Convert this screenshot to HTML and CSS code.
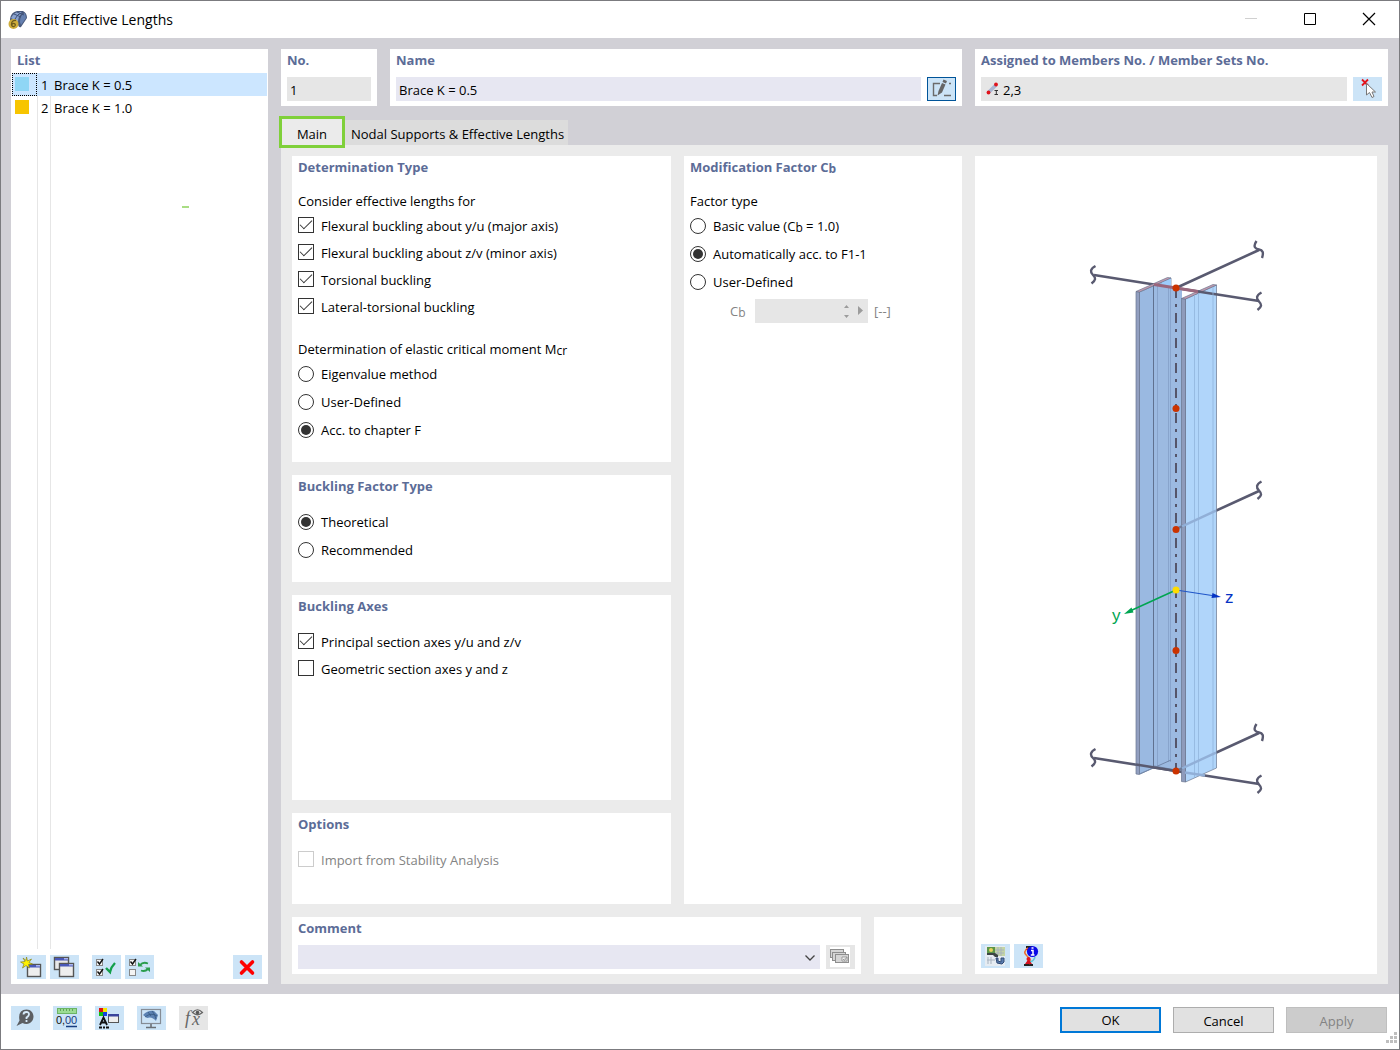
FILE: index.html
```html
<!DOCTYPE html>
<html lang="en">
<head>
<meta charset="utf-8">
<meta name="viewport" content="width=device-width, initial-scale=1">
<title>Edit Effective Lengths</title>
<link rel="stylesheet" href="styles.css">
</head>
<body>
<div class="window">
  <header class="titlebar">
    <svg class="app-icon" width="20" height="20" viewBox="0 0 20 20" aria-hidden="true">
      <path d="M2 9 Q3 2 9 1 L15 1 Q19 3 19 8 L13 17 Q11 18 10 15 L2 12Z" fill="#4a5a7c"/>
      <path d="M3 8 Q6 2 11 2 L15 2 Q10 6 10 12Z" fill="#8ba3cf"/>
      <path d="M12 12 Q12 5 17 3 L18 8 L13 15Z" fill="#6580b0"/>
      <path d="M6 4 L13 7 M9 2 L16 5 M7 9 Q9 4 15 2" fill="none" stroke="#3c5078" stroke-width="1"/>
      <circle cx="5.500" cy="14" r="5" fill="#cfae3c"/>
      <path d="M8 10.500 Q3.500 10 3.500 14.500 Q4 17 6 16.500 Q8 15.500 7 14 Q5.500 12.500 3.800 14.500" fill="none" stroke="#6d5b1c" stroke-width="1.300"/>
    </svg>
    <h1 class="titlebar-text">Edit Effective Lengths</h1>
    <div class="window-controls">
      <button class="window-button" aria-label="Minimize" disabled><svg width="14" height="14" viewBox="0 0 14 14"><path d="M1 6.500H13" stroke="#d0d0d0"/></svg></button>
      <button class="window-button" aria-label="Maximize"><svg width="14" height="14" viewBox="0 0 14 14"><path d="M1.500 1.500H12.500V12.500H1.500Z" fill="none" stroke="#000"/></svg></button>
      <button class="window-button" aria-label="Close"><svg width="14" height="14" viewBox="0 0 14 14"><path d="M1 1L13 13M13 1L1 13" stroke="#000" stroke-width="1.200"/></svg></button>
    </div>
  </header>

  <main class="body">
    <section class="list-panel">
      <h2 class="card-title list-title">List</h2>
      <div class="list-area">
        <table class="list">
          <tbody>
            <tr class="list-row selected"><td class="list-color focused"><span class="swatch sky"></span></td><td class="list-no">1</td><td class="list-name">Brace K = 0.5</td></tr>
            <tr class="list-row"><td class="list-color"><span class="swatch amber"></span></td><td class="list-no">2</td><td class="list-name">Brace K = 1.0</td></tr>
          </tbody>
        </table>
        <span class="marker"></span>
      </div>
      <div class="list-tools">
        <div class="tool-pair">
          <button class="tool" aria-label="New">
            <svg width="24" height="24" viewBox="0 0 24 24"><rect x="8.500" y="9.500" width="13" height="12" fill="#eee" stroke="#555" stroke-width="1.400"/><rect x="9" y="10" width="12" height="2.500" fill="#4a58b8"/><rect x="17" y="10" width="4" height="1.500" fill="#aab6ee"/><path d="M7.500 2L8.500 6L12.500 4L10 7.500L13.500 9L9.500 9.500L10.500 13L7 10.500L3.500 13L5 9L1.500 7L6 6.500L4 3L7 5.500Z" fill="#fff200" stroke="#8a8420" stroke-width=".7"/></svg>
          </button>
          <button class="tool" aria-label="Copy">
            <svg width="24" height="24" viewBox="0 0 24 24"><rect x="2.500" y="2.500" width="14" height="12" fill="#e8e8e8" stroke="#555" stroke-width="1.400"/><rect x="3" y="3" width="13" height="2.500" fill="#4a58b8"/><rect x="12" y="3" width="4" height="1.500" fill="#aab6ee"/><rect x="7.500" y="8.500" width="14" height="13" fill="#eee" stroke="#555" stroke-width="1.400"/><rect x="8" y="9" width="13" height="2.500" fill="#4a58b8"/><rect x="17" y="9" width="4" height="1.500" fill="#aab6ee"/></svg>
          </button>
        </div>
        <div class="tool-pair">
          <button class="tool" aria-label="Select all">
            <svg width="24" height="24" viewBox="0 0 24 24"><g fill="#f4f4f4" stroke="#888"><rect x="2.500" y="4.500" width="6" height="6"/><rect x="2.500" y="14.500" width="6" height="6"/></g><path d="M3.500 6.500L5.500 9L9 4M3.500 16.500L5.500 19L9 14" fill="none" stroke="#111" stroke-width="1.400"/><path d="M12 13L16 17Q17 12 21 8" fill="none" stroke="#12a04a" stroke-width="2.400"/></svg>
          </button>
          <button class="tool" aria-label="Invert selection">
            <svg width="24" height="24" viewBox="0 0 24 24"><g fill="#f4f4f4" stroke="#888"><rect x="2.500" y="4.500" width="6" height="6"/><rect x="2.500" y="14.500" width="6" height="6"/></g><path d="M3.500 6.500L5.500 9L9 4" fill="none" stroke="#111" stroke-width="1.400"/><path d="M13 10Q16 6.500 21 8.500M21 14Q18 17 14 15.500" fill="none" stroke="#2a9d4c" stroke-width="1.800"/><path d="M11 7V11.500H16ZM23 17V12.500H18Z" fill="#2a9d4c"/></svg>
          </button>
        </div>
        <button class="tool tool-end" aria-label="Delete">
          <svg width="24" height="24" viewBox="0 0 24 24"><path d="M6.500 7L17.500 18M17.500 7L6.500 18" stroke="#fe0000" stroke-width="3.600" stroke-linecap="round"/></svg>
        </button>
      </div>
    </section>

    <div class="detail">
      <div class="head-row">
        <section class="card card-no">
          <label class="card-title" for="no">No.</label>
          <div class="field-row"><input class="field readonly" id="no" type="text" value="1" readonly></div>
        </section>
        <section class="card card-name">
          <label class="card-title" for="name">Name</label>
          <div class="field-row">
            <input class="field" id="name" type="text" value="Brace K = 0.5">
            <button class="tool tool-active" aria-label="Edit name">
              <svg width="24" height="24" viewBox="0 0 24 24"><path d="M11 6.500H4.500V18.500H8M15 18.500H22M20 6.500H22" fill="none" stroke="#6b6b6b" stroke-width="1.400"/><path d="M14.500 2.500L18 4L17 6.500L13.500 5ZM13 6L16.500 7.500L13 15.500L8.500 18.500L9.500 14Z" fill="#666"/></svg>
            </button>
          </div>
        </section>
        <section class="card card-assigned">
          <label class="card-title" for="assigned">Assigned to Members No. / Member Sets No.</label>
          <div class="field-row">
            <div class="icon-field">
              <svg width="14" height="14" viewBox="0 0 14 14" aria-hidden="true"><path d="M3 10L10 3" stroke="#a9b7d3" stroke-width="3.500"/><circle cx="2.500" cy="10.500" r="1.900" fill="#e0141c"/><circle cx="10" cy="2.500" r="1.900" fill="#e0141c"/><path d="M8.500 8.500H12M8.500 12.500H12M10.300 8.500V12.500" stroke="#333"/></svg>
              <input class="field readonly" id="assigned" type="text" value="2,3" readonly>
            </div>
            <button class="tool" aria-label="Pick members">
              <svg width="24" height="24" viewBox="0 0 24 24"><path d="M7 2.500L13 8.500M13 2.500L7 8.500" stroke="#e3141c" stroke-width="1.800"/><path d="M11.500 6.500V18L14.500 15.500L17 20.500L19 19.500L17 15H20.500Z" fill="#fff" stroke="#777"/></svg>
            </button>
          </div>
        </section>
      </div>

      <nav class="tabs">
        <button class="tab tab-current">Main</button>
        <button class="tab">Nodal Supports &amp; Effective Lengths</button>
      </nav>

      <div class="tab-panel">
        <div class="forms">
          <div class="form-columns">
            <div class="form-stack">
              <section class="card card-padded">
                <h2 class="card-title">Determination Type</h2>
                <p class="group-label">Consider effective lengths for</p>
                <label class="check-row"><input type="checkbox" checked>Flexural buckling about y/u (major axis)</label>
                <label class="check-row"><input type="checkbox" checked>Flexural buckling about z/v (minor axis)</label>
                <label class="check-row"><input type="checkbox" checked>Torsional buckling</label>
                <label class="check-row"><input type="checkbox" checked>Lateral-torsional buckling</label>
                <p class="group-label group-second">Determination of elastic critical moment M<span class="low">cr</span></p>
                <label class="radio-row"><input type="radio" name="mcr">Eigenvalue method</label>
                <label class="radio-row"><input type="radio" name="mcr">User-Defined</label>
                <label class="radio-row"><input type="radio" name="mcr" checked>Acc. to chapter F</label>
              </section>
              <section class="card card-padded">
                <h2 class="card-title title-spaced">Buckling Factor Type</h2>
                <label class="radio-row"><input type="radio" name="factor" checked>Theoretical</label>
                <label class="radio-row"><input type="radio" name="factor">Recommended</label>
              </section>
              <section class="card card-grow">
                <h2 class="card-title title-spaced">Buckling Axes</h2>
                <label class="check-row"><input type="checkbox" checked>Principal section axes y/u and z/v</label>
                <label class="check-row"><input type="checkbox">Geometric section axes y and z</label>
              </section>
              <section class="card card-options">
                <h2 class="card-title title-spaced">Options</h2>
                <label class="check-row disabled"><input type="checkbox" disabled>Import from Stability Analysis</label>
              </section>
            </div>
            <section class="card">
              <h2 class="card-title">Modification Factor C<span class="low">b</span></h2>
              <p class="group-label">Factor type</p>
              <label class="radio-row"><input type="radio" name="cb"><span>Basic value (C<span class="low">b</span> = 1.0)</span></label>
              <label class="radio-row"><input type="radio" name="cb" checked>Automatically acc. to F1-1</label>
              <label class="radio-row"><input type="radio" name="cb">User-Defined</label>
              <div class="cb-row">
                <label class="cb-label" for="cb-value">C<span class="low">b</span></label>
                <div class="spin">
                  <input class="field readonly" id="cb-value" type="text" disabled>
                  <svg width="24" height="16" viewBox="0 0 24 16" aria-hidden="true"><path d="M1 5H6L3.500 2ZM1 12H6L3.500 15ZM15 3V12L20 7.500Z" fill="#9c9c9c"/></svg>
                </div>
                <span>[--]</span>
              </div>
            </section>
          </div>
          <div class="comment-row">
            <section class="card card-comment">
              <label class="card-title" for="comment">Comment</label>
              <div class="field-row">
                <div class="select-wrap">
                  <select class="field" id="comment"><option></option></select>
                  <svg class="chevron" width="12" height="8" viewBox="0 0 12 8" aria-hidden="true"><path d="M1.500 1.500L6 6L10.500 1.500" fill="none" stroke="#444" stroke-width="1.300"/></svg>
                </div>
                <button class="tool tool-disabled" aria-label="Comment library" disabled>
                  <svg width="24" height="24" viewBox="0 0 24 24"><rect x="2" y="2" width="20" height="20" fill="#fff"/><g fill="#d5d5d5" stroke="#8e8e8e"><rect x="2.500" y="4.500" width="13" height="8"/><rect x="4.500" y="7.500" width="13" height="8"/><rect x="7.500" y="9.500" width="13" height="8"/></g><path d="M14 12H19V16H14ZM15 14L16.500 15.500L19 12" fill="#fff" stroke="#999"/></svg>
                </button>
              </div>
            </section>
            <section class="card"></section>
          </div>
        </div>

        <section class="card preview">
          <svg class="figure" viewBox="1076 200 200 700" width="200" height="700" role="img" aria-label="Member with y and z axes">
            <g fill="none" stroke="#595a70" stroke-width="2.600">
              <path d="M1094 275L1176 288L1259 301M1176 288L1259 250M1176 529L1259 491M1094 758L1176 771L1259 784M1176 771L1259 733"/>
            </g>
            <g stroke="#69768f" stroke-width=".7">
              <path d="M1139.500 292L1171 278V760L1139.500 774Z" fill="#9ab9e1"/>
              <path d="M1162 282L1171 278V286L1162 284Z" fill="#9dccfb" stroke="none"/>
              <path d="M1153.500 285L1182 289.500V772L1153.500 767Z" fill="#9cbae1" stroke="none"/>
              <path d="M1136 291.500L1139.500 292V774.500L1136 774Z" fill="#929fc0"/>
              <path d="M1136 291.500L1167.500 277.500L1171 278L1139.500 292Z" fill="#c69aae"/>
            </g>
            <path d="M1153.500 285V767" stroke="#60718f" stroke-width="1"/>
            <path d="M1157.500 286V767M1168.500 288V762M1170.500 288V762" stroke="#839ec6" stroke-width=".8"/>
            <path d="M1140 774L1171 760M1154 766L1176 770" stroke="#7187aa" stroke-width="1"/>
            <path d="M1136 764.500L1176 771L1182 772" stroke="#595a70" stroke-width="2.600"/>
            <g stroke="#69768f" stroke-width=".7">
              <path d="M1185.500 299L1216.500 285V768L1185.500 782Z" fill="#b0d5fa"/>
              <path d="M1181.500 298.500L1185.500 299V782L1181.500 781.500Z" fill="#8e9bbb"/>
              <path d="M1181.500 298.500L1213 284.500L1216.500 285L1185.500 299Z" fill="#c69aae"/>
            </g>
            <path d="M1154 284.500L1198 291.500" stroke="#9a667c" stroke-width="3.200"/>
            <path d="M1198 291.500L1217 294.500" stroke="#595a70" stroke-width="2.600"/>
            <path d="M1194.500 295V777M1198.500 293V776M1213 287V769" stroke="#91b4dc" stroke-width=".8"/>
            <path d="M1176 529L1184 525.300M1176 771L1184 767.300" stroke="#6e7c99" stroke-width="2.400"/>
            <path d="M1182 526.300L1216 510.700M1182 768.300L1216 752.700M1185 772.500L1205 775.500" stroke="#91afd7" stroke-width="2.400"/>
            <path d="M1176 288V771" stroke="#55556a" stroke-width="2" stroke-dasharray="10 6 3 6"/>
            <g fill="none" stroke="#595a70" stroke-width="2.400">
              <path id="wave" d="M1095.500 266C1090 269 1090 272 1093 275S1096 280 1091.500 283.500"/>
              <use href="#wave" y="483"/>
              <use href="#wave" x="166" y="26.500"/>
              <use href="#wave" x="166" y="215.500"/>
              <use href="#wave" x="166" y="509.500"/>
              <path d="M1256.500 241C1252.500 247 1255.500 249 1259 249.500S1264 252 1262 258M1256.500 724C1252.500 730 1255.500 732 1259 732.500S1264 735 1262 741"/>
            </g>
            <g fill="#cb3300"><circle cx="1176" cy="288" r="3.500"/><circle cx="1176" cy="408.500" r="3.500"/><circle cx="1176" cy="529.500" r="3.500"/><circle cx="1176" cy="650.500" r="3.500"/><circle cx="1176" cy="771" r="3.500"/></g>
            <path d="M1176 590L1130 611" stroke="#00a551" stroke-width="1.500"/><path d="M1124 614L1131.500 607.500L1133.500 612.500Z" fill="#00a551"/>
            <path d="M1176 590L1212 595.500" stroke="#1f55c8" stroke-width="1.200"/><path d="M1221 597L1211.500 598L1212.500 593Z" fill="#0432c4"/>
            <circle cx="1176" cy="590" r="3.500" fill="#ffdc00"/>
            <text class="axis" x="1112" y="621" fill="#00a551">y</text>
            <text class="axis" x="1225" y="603" fill="#0432c4">z</text>
          </svg>
          <div class="tool-pair">
            <button class="tool" aria-label="Rendering">
              <svg width="24" height="24" viewBox="0 0 24 24"><rect x="2" y="2" width="20" height="20" fill="#e6ecf2"/><rect x="4" y="3" width="8" height="7" fill="#5b9548"/><circle cx="8" cy="6" r="2" fill="#e8d35c"/><path d="M12 3H22V12H12Z" fill="#c4d5a4"/><path d="M12 6H21M12 9H21M15 3V12M18 3V12M5 13V20M8 13V20M4 16H12" stroke="#a7b2be"/><path d="M4 9H12L15 11V13H12L10 11H4Z" fill="#3c4544"/><path d="M13 14L15 14V17L18 18V14L21 14V18L19 20L14 19Z" fill="#5a7cae" stroke="#2f4a75"/></svg>
            </button>
            <button class="tool" aria-label="Information">
              <svg width="24" height="24" viewBox="0 0 24 24"><path d="M10 2H16V4H10ZM8 20H17V22H8Z" fill="#222"/><path d="M12 4Q6 8 11 12T13 20" fill="none" stroke="#ee6d2c" stroke-width="1.600"/><path d="M19 13Q18 17 14 18" fill="none" stroke="#62c6d8" stroke-width="1.500"/><path d="M10 5H15L13 8ZM9 20L12.500 15L16 20Z" fill="#d41320"/><circle cx="12.500" cy="15" r="2" fill="#e0141c"/><circle cx="16.500" cy="7.500" r="5.600" fill="#0909e6"/><path d="M15 6.500H17V10.500M14.800 11H18.500M15.500 4H17.500" fill="none" stroke="#fff" stroke-width="1.500"/></svg>
            </button>
          </div>
        </section>
      </div>
    </div>
  </main>

  <footer class="footer">
    <div class="footer-tools">
      <button class="tool" aria-label="Help">
        <svg width="24" height="24" viewBox="0 0 24 24"><path d="M13.500 3.500C18 3.500 20.500 7 20.500 10.500S18 18 13.500 18Q11 18 9.500 17L3.500 20L6.500 14.500Q4.500 4 13.500 3.500Z" fill="#5c5f63"/><path d="M10.500 8.500Q10.500 6 13.300 6T16 8.300Q16 10 13.500 11.500V13M13.500 14V16" fill="none" stroke="#d8ebfb" stroke-width="1.800"/></svg>
      </button>
      <button class="tool" aria-label="Units and decimal places">
        <svg width="24" height="24" viewBox="0 0 24 24"><rect x="2.500" y="2.500" width="19" height="5" fill="#9bdc93" stroke="#6cb565"/><path d="M5.500 3V5M8.500 3V5M11.500 3V5M14.500 3V5M17.500 3V5" stroke="#5fa558"/><text class="glyph-num" x="1" y="18">0,</text><text class="glyph-num glyph-blue" x="10" y="18">00</text><path d="M11 20.500H22" stroke="#173d80" stroke-width="1.500"/></svg>
      </button>
      <button class="tool" aria-label="Display options">
        <svg width="24" height="24" viewBox="0 0 24 24"><path d="M2 2H6V6H2Z" fill="#e01010"/><path d="M6 2H10V6H6Z" fill="#f7e600"/><path d="M2 6H6V10H2Z" fill="#10c010"/><path d="M6 6H10V10H6Z" fill="#1540e0"/><path d="M3 19L6.500 11.500L10 19M4.500 16.500H8.500" fill="none" stroke="#111" stroke-width="1.800"/><path d="M2 21.500H5M6 21.500H8M9 21.500H12" stroke="#111" stroke-width="2"/><rect x="11.500" y="8.500" width="10" height="8" fill="#eee" stroke="#555"/><path d="M11 8H22V10.500H11Z" fill="#3a449c"/></svg>
      </button>
      <button class="tool" aria-label="Graphic view">
        <svg width="24" height="24" viewBox="0 0 24 24"><rect x="2.500" y="3.500" width="19" height="14" fill="none" stroke="#858c95" stroke-width="1.200"/><path d="M12 18V21M7 21.500H17" stroke="#6a6f75" stroke-width="1.600"/><path d="M4 9Q9 4 15 5L19 9L17 15Q13 10 8 12Z" fill="#5c82b3"/><path d="M6 11Q12 6 18 10M9 6L12 10M13 5Q16 8 17 13" fill="none" stroke="#35587f" stroke-width=".8"/></svg>
      </button>
      <button class="tool tool-disabled" aria-label="Formula" disabled>
        <svg width="24" height="24" viewBox="0 0 24 24"><text class="glyph-fx" x="4" y="18">f</text><text class="glyph-fx" x="11" y="19">x</text><path d="M11.500 6.500Q16.500 1 21.500 6.500Q16.500 11 11.500 6.500Z" fill="#e6e6e6" stroke="#666" stroke-width="1.200"/><circle cx="16.500" cy="6.500" r="1.800" fill="#555"/></svg>
      </button>
    </div>
    <div class="dialog-buttons">
      <button class="dialog-button primary">OK</button>
      <button class="dialog-button">Cancel</button>
      <button class="dialog-button" disabled>Apply</button>
    </div>
    <svg class="grip" width="11" height="11" viewBox="0 0 11 11" aria-hidden="true"><path d="M8 0H11V3H8ZM4 4H7V7H4ZM8 4H11V7H8ZM0 8H3V11H0ZM4 8H7V11H4ZM8 8H11V11H8Z" fill="#bfbfbf"/></svg>
  </footer>
</div>
</body>
</html>
```
FILE: styles.css
```css
* {
  box-sizing: border-box;
}

body {
  margin: 0;
  font: 13px/22px "Open Sans", "Noto Sans", sans-serif;
  color: #000;
}

button,
input,
select {
  margin: 0;
  font: inherit;
  color: inherit;
}

h1,
h2,
p {
  margin: 0;
}

svg {
  display: block;
}

.window {
  display: flex;
  flex-direction: column;
  min-height: 100vh;
  border: 1px solid #7b7b7f;
  background: #fff;
}

/* Title bar */
.titlebar {
  display: flex;
  align-items: center;
  height: 37px;
  padding-left: 7px;
}

.titlebar-text {
  margin-left: 6px;
  font-size: 14px;
  font-weight: 400;
}

.window-controls {
  display: flex;
  align-self: flex-start;
  margin-right: 1px;
  margin-left: auto;
}

.window-button {
  display: flex;
  align-items: center;
  justify-content: center;
  width: 59px;
  height: 36px;
  padding: 0;
  border: 0;
  background: none;
}

/* Body */
.body {
  display: flex;
  flex: 1;
  gap: 13px;
  padding: 11px 11px 10px 10px;
  background: #d1d0d6;
}

.card,
.list-panel {
  background: #fff;
}

.card {
  padding: 0 6px 5px;
}

.card-title {
  display: block;
  font-size: 13px;
  font-weight: 700;
  line-height: 22px;
  color: #5c6c97;
}

.low {
  position: relative;
  top: 1px;
  font-size: 12px;
  line-height: 1;
}

/* List of effective lengths */
.list-panel {
  display: flex;
  flex-direction: column;
  flex: 0 0 257px;
}

.list-title {
  padding-left: 6px;
}

.list-area {
  position: relative;
  flex: 1;
  margin: 2px 1px 6px;
  background: linear-gradient(#e6e6e6, #e6e6e6) 25px 0 / 1px 100% no-repeat,
    linear-gradient(#e6e6e6, #e6e6e6) 38px 0 / 1px 100% no-repeat;
}

.list {
  width: 100%;
  border-collapse: collapse;
}

.list-row {
  height: 23px;
}

.list-row td {
  padding: 0;
}

.list-row.selected {
  background: #cce6ff;
}

.list-row .list-color {
  width: 25px;
  padding: 0 0 1px 3px;
}

.list-color.focused {
  outline: 1px dotted #000;
  outline-offset: -1px;
}

.list-row .list-no {
  width: 13px;
  padding-left: 4px;
}

.list-row .list-name {
  padding-left: 4px;
}

.swatch {
  display: block;
  width: 14px;
  height: 14px;
}

.sky {
  background: #8fd6f5;
}

.amber {
  background: #f7c500;
}

.marker {
  position: absolute;
  top: 133px;
  left: 170px;
  width: 7px;
  height: 2px;
  background: #a9dd84;
}

.list-tools {
  display: flex;
  gap: 13px;
  padding: 0 6px 5px;
}

.tool-pair {
  display: flex;
  gap: 4px;
}

.tool-end {
  margin-left: auto;
}

.tool {
  display: flex;
  align-items: center;
  flex: none;
  width: 29px;
  height: 24px;
  padding: 0 0 0 2px;
  border: 0;
  background: #cce4f7;
}

.tool-active {
  padding-left: 1px;
  border: 1px solid #005499;
}

.tool-disabled {
  background: #e6e6e6;
}

/* Header fields */
.detail {
  display: flex;
  flex: 1;
  flex-direction: column;
  min-width: 0;
}

.head-row {
  display: grid;
  grid-template-columns: 96px 1fr 413px;
  gap: 13px;
}

.field-row {
  display: flex;
  gap: 6px;
  padding-top: 6px;
}

.field {
  flex: 1;
  width: 100%;
  min-width: 0;
  height: 24px;
  padding: 2px 3px 0;
  border: 0;
  border-radius: 0;
  background: #e7e7f2;
}

.field.readonly {
  background: #e6e6e6;
}

.icon-field {
  display: flex;
  flex: 1;
  align-items: center;
  padding-left: 5px;
  background: #e6e6e6;
}

/* Tabs */
.tabs {
  display: flex;
  align-items: center;
  height: 32px;
  margin: 10px 0 -3px -2px;
  z-index: 1;
}

.tab {
  height: 25px;
  padding: 3px 4px 0 6px;
  border: 0;
  background: #dcdcdc;
}

.tab-current {
  width: 66px;
  height: 32px;
  padding: 3px 0 0;
  border: 3px solid #7fd03a;
  background: #ebebeb;
}

.tab-panel {
  display: flex;
  flex: 1;
  gap: 13px;
  padding: 11px 11px 10px;
  background: #ebebeb;
}

.forms,
.form-stack {
  display: flex;
  flex-direction: column;
  gap: 13px;
}

.forms {
  flex: 1;
}

.form-columns {
  display: grid;
  flex: 1;
  grid-template-columns: 379fr 278fr;
  gap: 13px;
}

.card-padded {
  padding-bottom: 18px;
}

.card-grow {
  flex: 1;
}

.card-options {
  padding-bottom: 31px;
}

.title-spaced {
  margin-bottom: 11px;
}

.group-label {
  margin-top: 12px;
}

.group-second {
  margin-top: 18px;
}

.check-row,
.radio-row {
  display: flex;
  align-items: center;
  gap: 7px;
}

.check-row {
  height: 27px;
}

.radio-row {
  height: 28px;
}

.disabled {
  color: #838383;
}

input[type="checkbox"],
input[type="radio"] {
  display: grid;
  place-items: center;
  width: 16px;
  height: 16px;
  border: 1px solid #333;
  background: #fff;
  appearance: none;
}

input[type="checkbox"] {
  margin-bottom: 1px;
}

input[type="radio"] {
  border-radius: 50%;
}

input[type="checkbox"]:disabled {
  border-color: #ccc;
}

input[type="checkbox"]:checked::before {
  width: 11px;
  height: 5px;
  margin-bottom: 4px;
  border: solid #333;
  border-width: 0 0 1px 1px;
  content: "";
  transform: rotate(-45deg);
}

input[type="radio"]:checked::before {
  width: 10px;
  height: 10px;
  border-radius: 50%;
  background: #333;
  content: "";
}

.cb-row {
  display: flex;
  align-items: center;
  gap: 6px;
  margin-top: 3px;
  padding-left: 40px;
  color: #838383;
}

.cb-label {
  width: 19px;
}

.spin {
  display: flex;
  align-items: center;
  width: 113px;
  padding-right: 1px;
  background: #e6e6e6;
}

.comment-row {
  display: grid;
  grid-template-columns: 1fr 88px;
  gap: 13px;
}

.select-wrap {
  display: flex;
  position: relative;
  flex: 1;
}

select.field {
  appearance: none;
}

.chevron {
  position: absolute;
  top: 9px;
  right: 4px;
  pointer-events: none;
}

/* Preview */
.preview {
  display: flex;
  flex: 0 0 402px;
  flex-direction: column;
  padding-bottom: 6px;
}

.figure {
  flex: 1;
  align-self: center;
}

.axis {
  font: 17px "Liberation Sans", sans-serif;
}

/* Footer */
.footer {
  display: flex;
  position: relative;
  justify-content: space-between;
  height: 55px;
  padding: 12px 12px 0 10px;
}

.footer-tools {
  display: flex;
  gap: 13px;
}

.dialog-buttons {
  display: flex;
  gap: 12px;
  padding-top: 1px;
}

.dialog-button {
  width: 101px;
  height: 26px;
  padding: 2px 0 0;
  border: 1px solid #adadad;
  background: #e1e1e1;
}

.dialog-button.primary {
  padding-top: 0;
  border: 2px solid #0078d7;
}

.dialog-button:disabled {
  border-color: #bfbfbf;
  color: #838383;
  background: #ccc;
}

.grip {
  position: absolute;
  right: 2px;
  bottom: 6px;
}

.glyph-num {
  font: 11px "Liberation Sans", sans-serif;
  fill: #111;
}

.glyph-blue {
  fill: #173d80;
}

.glyph-fx {
  font: italic 18px "Liberation Serif", serif;
  fill: #666;
}
```
